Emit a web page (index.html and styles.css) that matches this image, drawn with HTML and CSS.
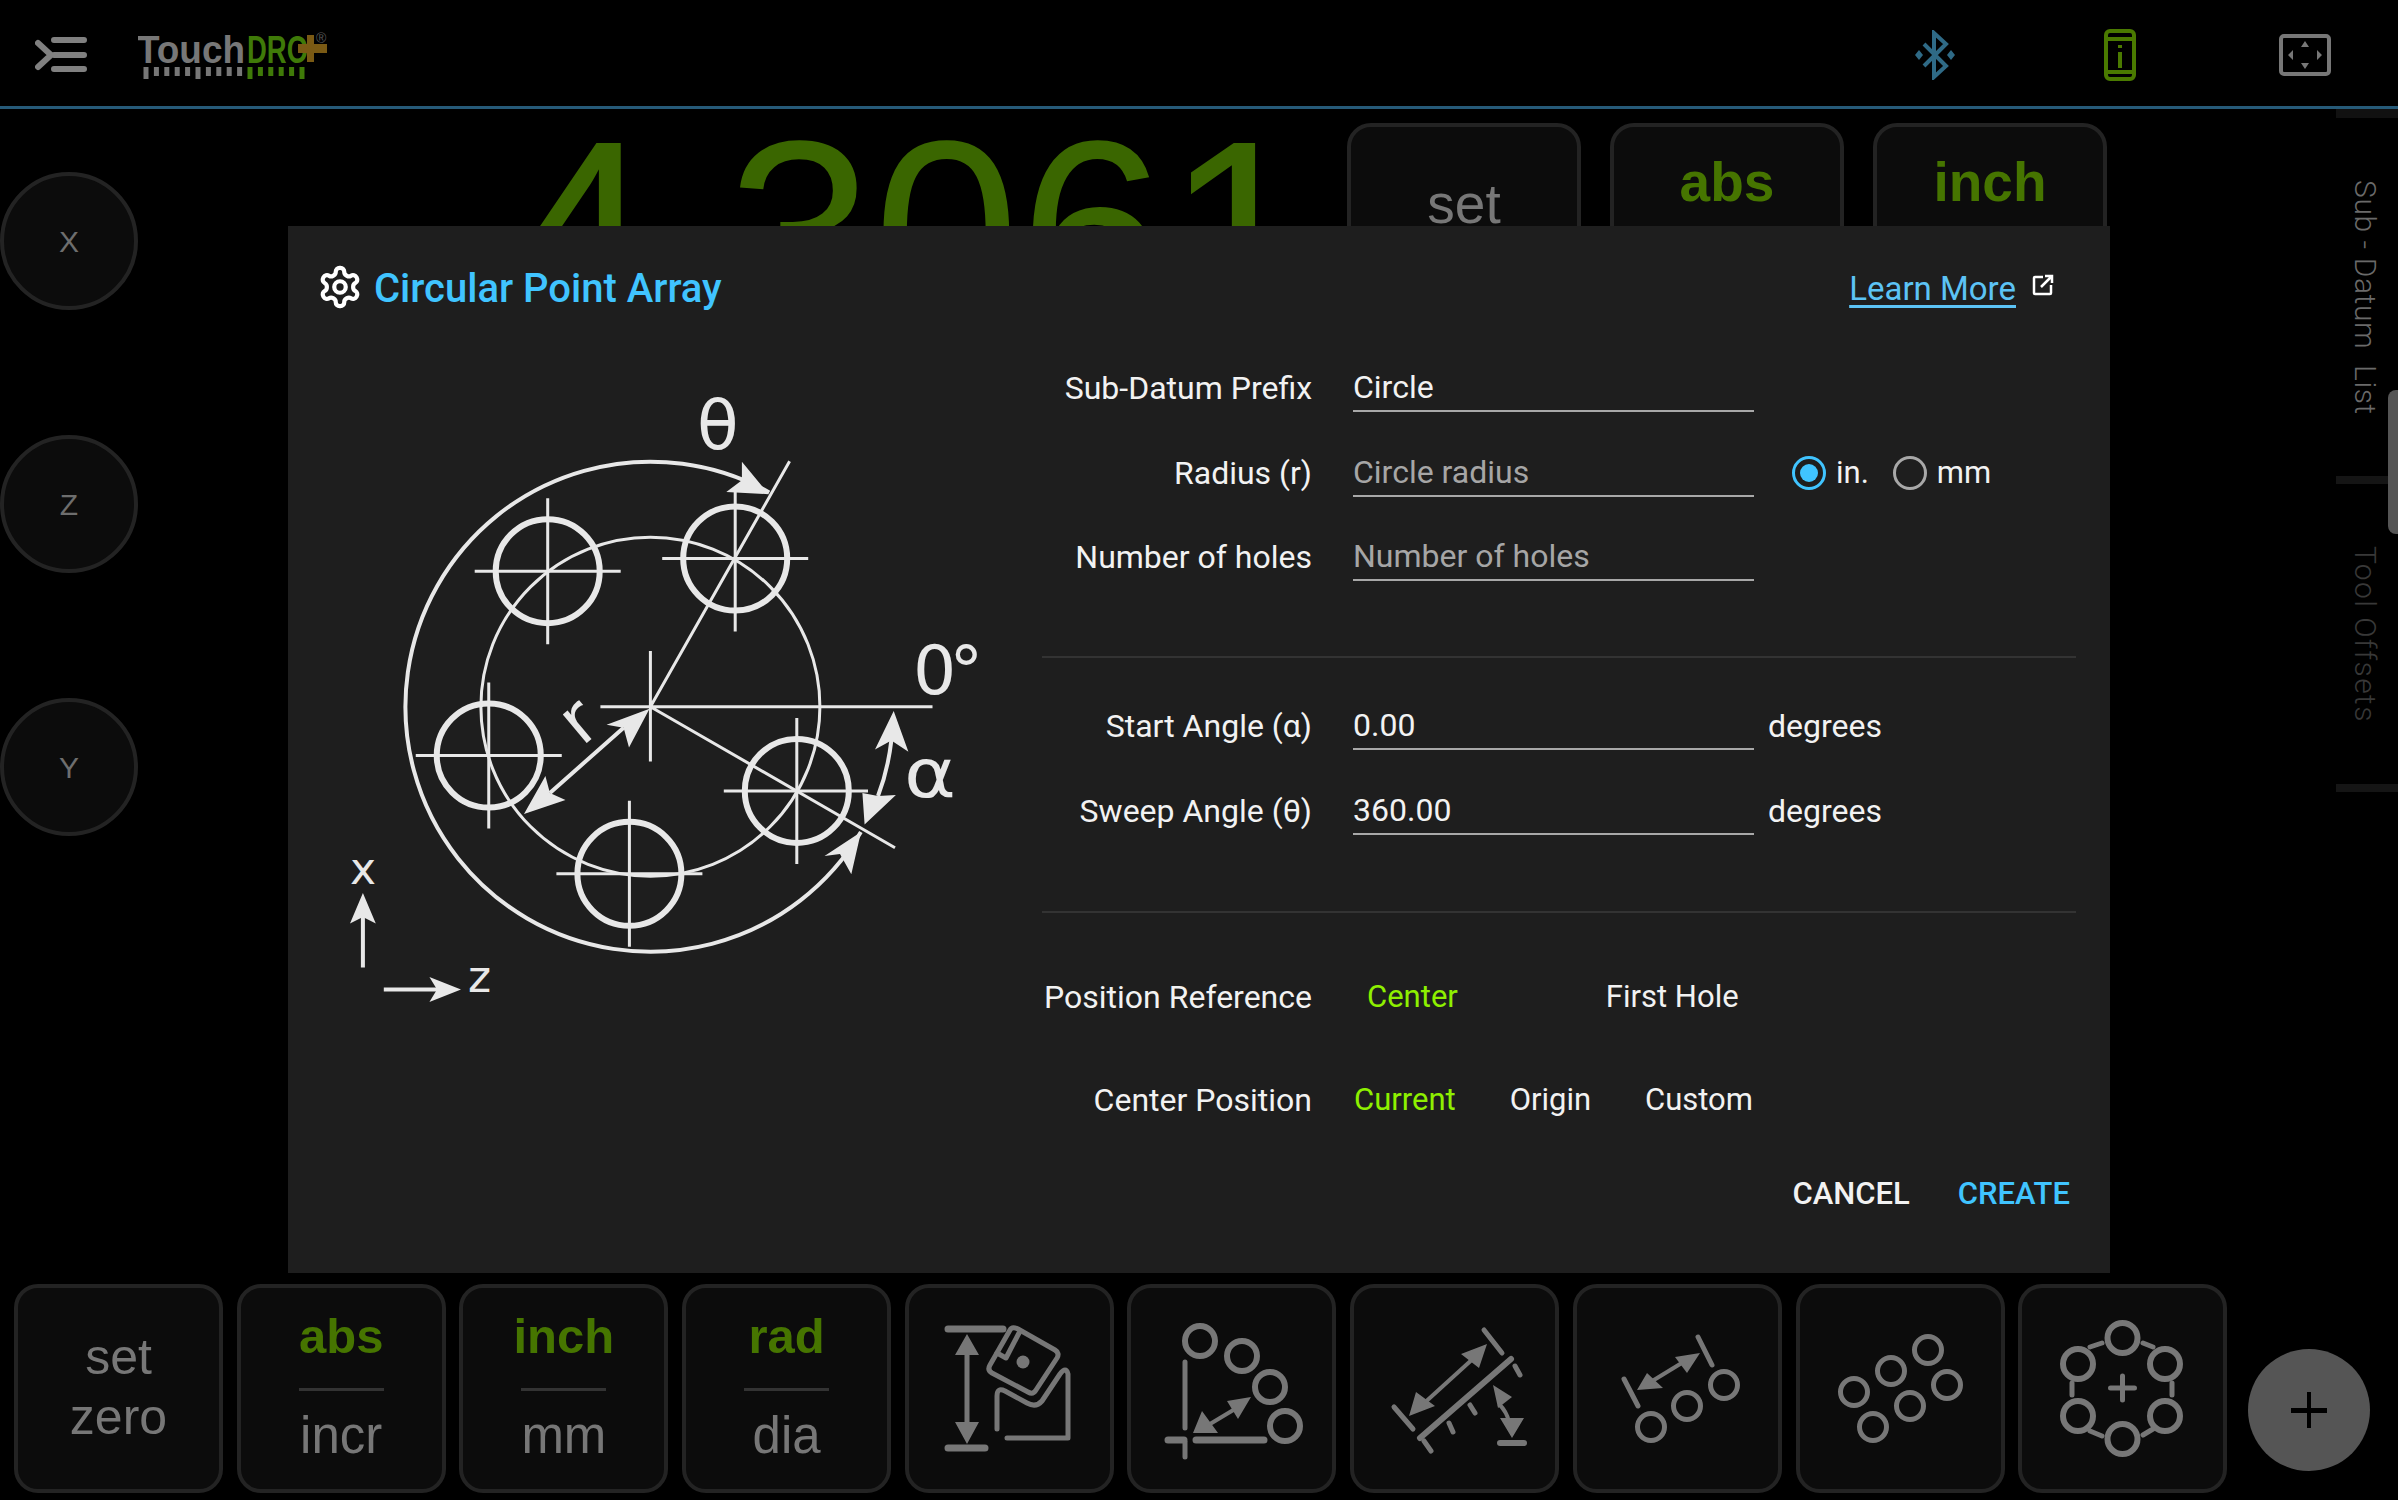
FILE: index.html
```html
<!DOCTYPE html>
<html lang="en">
<head>
<meta charset="utf-8">
<title>TouchDRO - Circular Point Array</title>
<link rel="stylesheet" href="styles.css">
</head>
<body>
<div class="app">
  <header class="topbar">
    <svg class="menu-icon" viewBox="0 0 60 40" width="60" height="40">
      <path class="menu-stroke" d="M3 6 L16 18 L3 30 M19 3 H49 M19 18 H49 M19 32 H49"/>
    </svg>
    <svg class="logo" viewBox="0 0 200 50" width="200" height="50">
      <text class="logo-touch" x="-1" y="34" textLength="108" lengthAdjust="spacingAndGlyphs">Touch</text>
      <text class="logo-dro" x="109" y="34" textLength="61" lengthAdjust="spacingAndGlyphs">DRO</text>
      <path class="logo-plus" d="M169 6 H176 V15 H189 V24 H176 V33 H169 V24 H160 V15 H169 Z"/>
      <text class="logo-reg" x="178" y="14">®</text>
      <path class="ticks-grey" d="M8 38V50 M18.4 38V47 M28.8 38V47 M39.2 38V47 M49.6 38V47 M60 38V50 M70.4 38V47 M80.8 38V47 M91.2 38V47 M101.6 38V47"/>
      <path class="ticks-green" d="M112 38V50 M122.4 38V47 M132.800 38V47 M143.2 38V47 M153.6 38V47 M164 38V50"/>
    </svg>
    <div class="status-icons">
      <svg class="bt" viewBox="0 0 44 50" width="44" height="50">
        <path class="bt-stroke" d="M11 14 L33 36 L21 47 V3 L33 14 L11 36"/>
        <path class="bt-fill" d="M6 20 L10 25 L6 30 L2 25 Z M38 20 L42 25 L38 30 L34 25 Z"/>
      </svg>
      <svg class="phone" viewBox="0 0 32 52" width="32" height="52">
        <rect class="phone-stroke" x="2" y="2" width="28" height="48" rx="4"/>
        <path class="phone-stroke" d="M2 10 H30 M2 43 H30 M16 23 V39"/>
        <rect class="phone-fill" x="14" y="16" width="4" height="3"/>
      </svg>
      <svg class="fit" viewBox="0 0 52 42" width="52" height="42">
        <rect class="fit-stroke" x="2" y="2" width="48" height="38" rx="3"/>
        <path class="fit-fill" d="M26 7 L30 13 H22 Z M26 35 L30 29 H22 Z M9 21 L14 16 V26 Z M43 21 L38 16 V26 Z"/>
      </svg>
    </div>
  </header>

  <main class="main">
    <div class="axes">
      <div class="axis">X</div>
      <div class="axis">Z</div>
      <div class="axis">Y</div>
    </div>
    <div class="readout">
      <div class="digits">4.3061</div>
      <div class="key key-top"><span class="key-set">set</span></div>
      <div class="key key-top"><span class="key-on">abs</span></div>
      <div class="key key-top"><span class="key-on">inch</span></div>
    </div>
    <aside class="rail">
      <div class="rail-cap"></div>
      <div class="rail-item"><span class="rail-label">Sub - Datum&nbsp; List</span></div>
      <div class="rail-item rail-item-off"><span class="rail-label">Tool Offsets</span></div>
      <div class="rail-handle"></div>
    </aside>
  </main>

  <footer class="bottombar">
    <div class="key key-bottom"><div class="two-line">set<br>zero</div></div>
    <div class="key key-bottom"><div class="stack"><span class="stack-on">abs</span><i class="stack-rule"></i><span class="stack-off">incr</span></div></div>
    <div class="key key-bottom"><div class="stack"><span class="stack-on">inch</span><i class="stack-rule"></i><span class="stack-off">mm</span></div></div>
    <div class="key key-bottom"><div class="stack"><span class="stack-on">rad</span><i class="stack-rule"></i><span class="stack-off">dia</span></div></div>

    <div class="key key-bottom">
      <svg class="tool" viewBox="4 4 200 201" width="200" height="201">
        <path class="t7" d="M43 45 H98 M43 164 H80"/>
        <path class="t5" d="M62 66 V144"/>
        <path class="tf" d="M62 50 L74 71 H50 Z M62 160 L74 138 H50 Z"/>
        <path class="t5" d="M113 45 L150 66 Q155 69 152 74 L131 106 Q128 111 123 108 L87 89 Q82 86 85 81 L105 46 Q107 42 113 45 Z"/>
        <path class="t5" d="M114 49 L101 74 L92 69"/>
        <circle class="tf" cx="118" cy="78" r="6.500"/>
        <path class="t5" d="M92 145 V112 Q92 103 100 107 L122 119 Q131 124 137 117 L155 90 Q161 82 163 90 V154 H102"/>
      </svg>
    </div>

    <div class="key key-bottom">
      <svg class="tool" viewBox="4 4 200 201" width="200" height="201">
        <circle class="t6" cx="72" cy="57" r="15"/>
        <circle class="t6" cx="114" cy="72" r="15"/>
        <circle class="t6" cx="142" cy="103" r="15"/>
        <circle class="t6" cx="157" cy="142" r="15"/>
        <path class="t5" d="M57 78 V144"/>
        <path class="t7" d="M68 156 H136 M40 156 H56"/>
        <path class="t5" d="M57 158 V173"/>
        <path class="t4" d="M82 140 L112 122"/>
        <path class="tf" d="M123 113 L110 135 L99 117 Z M65 149 L74 127 L90 149 Z"/>
      </svg>
    </div>

    <div class="key key-bottom">
      <svg class="tool" viewBox="4 4 200 201" width="200" height="201">
        <path class="t6" d="M160 75 L69 154"/>
        <path class="t5" d="M133 46 L151 69 M43 123 L62 145"/>
        <path class="t4" d="M125 72 L70 122 M148 120 Q156 128 158 138"/>
        <path class="tf" d="M136 60 L128 84 L110 70 Z M58 132 L65 108 L84 122 Z"/>
        <path class="t5" d="M164 82 L169 91 M119 121 L124 129 M98 139 L102 148 M73 157 L80 167"/>
        <path class="tf" d="M142 101 L161 113 L147 124 Z M161 154 L149 134 H173 Z"/>
        <path class="t6" d="M149 159 H173"/>
      </svg>
    </div>

    <div class="key key-bottom">
      <svg class="tool" viewBox="4 4 200 201" width="200" height="201">
        <circle class="t5" cx="78" cy="143" r="13.5"/>
        <circle class="t5" cx="114" cy="122" r="13.5"/>
        <circle class="t5" cx="151" cy="101" r="13.5"/>
        <path class="t5" d="M125 53 L139 81 M51 95 L65 122"/>
        <path class="t4" d="M112 77 L76 99"/>
        <path class="tf" d="M127 69 L114 89 L102 73 Z M64 106 L74 89 L90 104 Z"/>
      </svg>
    </div>

    <div class="key key-bottom">
      <svg class="tool" viewBox="4 4 200 201" width="200" height="201">
        <circle class="t5" cx="132" cy="66" r="13.5"/>
        <circle class="t5" cx="95" cy="87" r="13.5"/>
        <circle class="t5" cx="58" cy="108" r="13.5"/>
        <circle class="t5" cx="151" cy="101" r="13.5"/>
        <circle class="t5" cx="114" cy="122" r="13.5"/>
        <circle class="t5" cx="77" cy="143" r="13.5"/>
      </svg>
    </div>

    <div class="key key-bottom">
      <svg class="tool" viewBox="4 4 200 201" width="200" height="201">
        <circle class="t6" cx="103.500" cy="54" r="15"/>
        <circle class="t6" cx="146" cy="80" r="15"/>
        <circle class="t6" cx="146" cy="132" r="15"/>
        <circle class="t6" cx="103.500" cy="155" r="15"/>
        <circle class="t6" cx="59" cy="132" r="15"/>
        <circle class="t6" cx="59" cy="80" r="15"/>
        <path class="t5" d="M71 63 L83 59 M124 59 L134 63 M153 99 V111 M134 145 L124 151 M71 147 L83 152 M53 99 V111"/>
        <path class="t5" d="M91.500 104 H115.500 M103.500 92 V116"/>
      </svg>
    </div>

    <div class="fab"><span class="fab-plus"></span></div>
  </footer>

  <section class="dialog">
    <div class="dialog-head">
      <svg class="gear" viewBox="0 0 24 24" width="46" height="46">
        <path d="M12.220 2h-.44a2 2 0 0 0-2 2v.18a2 2 0 0 1-1 1.730l-.43.25a2 2 0 0 1-2 0l-.15-.08a2 2 0 0 0-2.730.73l-.22.38a2 2 0 0 0 .73 2.730l.15.1a2 2 0 0 1 1 1.720v.51a2 2 0 0 1-1 1.740l-.15.09a2 2 0 0 0-.73 2.730l.22.38a2 2 0 0 0 2.730.73l.15-.08a2 2 0 0 1 2 0l.43.25a2 2 0 0 1 1 1.730V20a2 2 0 0 0 2 2h.44a2 2 0 0 0 2-2v-.18a2 2 0 0 1 1-1.730l.43-.25a2 2 0 0 1 2 0l.15.08a2 2 0 0 0 2.730-.73l.22-.39a2 2 0 0 0-.73-2.730l-.15-.08a2 2 0 0 1-1-1.740v-.5a2 2 0 0 1 1-1.740l.15-.09a2 2 0 0 0 .73-2.730l-.22-.38a2 2 0 0 0-2.730-.73l-.15.08a2 2 0 0 1-2 0l-.43-.25a2 2 0 0 1-1-1.730V4a2 2 0 0 0-2-2z"/>
        <circle cx="12" cy="12" r="3"/>
      </svg>
      <h1 class="dialog-title">Circular Point Array</h1>
      <a class="learn">Learn More</a>
      <svg class="ext" viewBox="0 0 22 22" width="22" height="22">
        <path d="M11 3 H3 Q2 3 2 4 V19 Q2 20 3 20 H18 Q19 20 19 19 V11 M9 13 L20 2 M13 2 H20 V9"/>
      </svg>
    </div>

    <div class="dialog-body">
      <svg class="diagram" viewBox="320 370 700 660" width="700" height="660">
        <path class="d4" d="M769.200 492.400 A245 245 0 1 0 860.900 832.100"/>
        <circle class="d3" cx="650.400" cy="706.700" r="169.500"/>
        <g class="d5">
          <circle cx="547.700" cy="571.200" r="52"/>
          <circle cx="735.200" cy="558.500" r="52"/>
          <circle cx="488.750" cy="755.500" r="52"/>
          <circle cx="629.400" cy="873.800" r="52"/>
          <circle cx="796.800" cy="790.900" r="52"/>
        </g>
        <path class="d3" d="M474.700 571.200 H620.700 M547.700 498.200 V644.200 M662.200 558.500 H808.200 M735.200 490 V631.500 M415.750 755.500 H561.750 M488.750 682.500 V828.500 M556.400 873.800 H702.400 M629.400 800.800 V946.800 M723.800 790.900 H868 M796.800 717.900 V863.900"/>
        <path class="d3" d="M600.400 706.700 H932.500 M650.400 651 V761.400 M650.400 706.700 L789.600 461.300 M650.400 706.700 L895 847.700"/>
        <path class="d4" d="M623.600 727.700 L549.900 793 M891.400 740 Q888 770 878 796 M362.900 967.600 V917 M383.800 989.500 H437"/>
        <g class="dfill">
          <path d="M768.700 494.200 L741.900 461.800 L741.900 480.300 L726.300 492 Z"/>
          <path d="M861 832 L824.500 856 L840 854 L851.300 874.200 Z"/>
          <path d="M649.500 708.800 L606.600 724.800 L623.600 727.700 L629 747.500 Z"/>
          <path d="M524 814 L545.400 776 L549.900 793 L565.500 800 Z"/>
          <path d="M893.700 710.900 L875 749.600 L891.400 740.400 L908.400 751.700 Z"/>
          <path d="M864.600 824.500 L862.400 793 L878 796 L895.900 795 Z"/>
          <path d="M362.900 893 L350 923.500 L362.900 917 L375.800 923.500 Z"/>
          <path d="M461 989.500 L429.400 977 L437 989.500 L429.400 1002 Z"/>
        </g>
        <text class="dtext" x="697" y="449">θ</text>
        <text class="dtext dtext-tight" x="913" y="694">0°</text>
        <text class="dtext" x="904" y="797" textLength="52" lengthAdjust="spacingAndGlyphs">α</text>
        <text class="dtext" transform="rotate(-40 582 747)" x="582" y="747">r</text>
        <text class="dtext-sm" x="350" y="883.500">x</text>
        <text class="dtext-sm" x="468" y="992">z</text>
      </svg>

      <form class="form">
        <div class="group">
          <div class="row">
            <div class="label">Sub-Datum Prefix</div>
            <div class="field">Circle</div>
          </div>
          <div class="row">
            <div class="label">Radius (r)</div>
            <div class="field field-hint">Circle radius</div>
            <div class="radios">
              <span class="radio radio-on"><i></i></span><span class="radio-text">in.</span>
              <span class="radio radio-off"></span><span class="radio-text">mm</span>
            </div>
          </div>
          <div class="row">
            <div class="label">Number of holes</div>
            <div class="field field-hint">Number of holes</div>
          </div>
        </div>
        <div class="rule rule-first"></div>
        <div class="group">
          <div class="row">
            <div class="label">Start Angle (α)</div>
            <div class="field">0.00</div>
            <div class="unit">degrees</div>
          </div>
          <div class="row">
            <div class="label">Sweep Angle (θ)</div>
            <div class="field">360.00</div>
            <div class="unit">degrees</div>
          </div>
        </div>
        <div class="rule rule-second"></div>
        <div class="row row-ref">
          <div class="label">Position Reference</div>
          <div class="choices choices-ref"><span class="chosen">Center</span><span>First Hole</span></div>
        </div>
        <div class="row row-center">
          <div class="label">Center Position</div>
          <div class="choices choices-center"><span class="chosen">Current</span><span>Origin</span><span>Custom</span></div>
        </div>
        <div class="actions">
          <span class="action">CANCEL</span>
          <span class="action action-main">CREATE</span>
        </div>
      </form>
    </div>
  </section>
</div>
</body>
</html>
```

FILE: styles.css
```css
* { box-sizing: border-box; }
html, body { margin: 0; padding: 0; background: #000; }
body { font-family: "Roboto", "Liberation Sans", sans-serif; }

.app {
  position: relative;
  width: 2398px;
  height: 1500px;
  overflow: hidden;
  display: flex;
  flex-direction: column;
  background: #000;
}

/* top bar */
.topbar {
  height: 109px;
  flex: none;
  border-bottom: 3px solid #265a78;
  display: flex;
  align-items: center;
  padding-left: 35px;
}
.menu-icon { flex: none; margin-top: 8px; }
.menu-stroke { fill: none; stroke: #808080; stroke-width: 6; stroke-linecap: round; stroke-linejoin: round; }
.logo { flex: none; margin-left: 43px; margin-top: 2px; }
.logo-touch, .logo-dro { font: 700 38px "Liberation Sans", sans-serif; }
.logo-touch { fill: #777; }
.logo-dro { fill: #3f7a08; }
.logo-plus { fill: #7a5a14; }
.logo-reg { font: 14px "Liberation Sans", sans-serif; fill: #555; }
.ticks-grey { stroke: #777; stroke-width: 5; fill: none; }
.ticks-green { stroke: #3f7a08; stroke-width: 5; fill: none; }

.status-icons { margin-left: auto; display: flex; align-items: center; padding: 4px 67px 0 0; }
.bt { margin-right: 147px; }
.bt-stroke { fill: none; stroke: #2f6a86; stroke-width: 4; stroke-linejoin: miter; }
.bt-fill { fill: #2f6a86; }
.phone { margin-right: 143px; }
.phone-stroke { fill: none; stroke: #4a7a00; stroke-width: 4; }
.phone-fill { fill: #4a7a00; }
.fit-stroke { fill: none; stroke: #777; stroke-width: 4; }
.fit-fill { fill: #777; }

/* main area */
.main { flex: 1; min-height: 0; display: flex; position: relative; }
.axes { flex: none; width: 139px; padding: 63px 0 0; display: flex; flex-direction: column; gap: 125px; }
.axis {
  width: 138px;
  height: 138px;
  border-radius: 50%;
  background: #0c0c0c;
  border: 4px solid #232323;
  display: flex;
  align-items: center;
  justify-content: center;
  color: #6e6e6e;
  font: 30px "Liberation Sans", sans-serif;
  padding-top: 2px;
}
.readout { flex: 1; display: flex; align-items: flex-start; gap: 29px; padding: 14px 0 0; min-width: 0; }
.digits {
  flex: 1;
  text-align: right;
  font: 263px/266px "Liberation Sans", sans-serif;
  color: #3a6600;
  margin-right: 6px;
  margin-top: -23px;
}
.key {
  flex: none;
  background: #0c0c0c;
  border: 4px solid #232323;
  border-radius: 24px;
  display: flex;
  justify-content: center;
  font-family: "Liberation Sans", sans-serif;
}
.key-top { width: 234px; height: 210px; font-size: 55px; line-height: 60px; }
.key-set { color: #777; padding-top: 47px; }
.key-on { color: #467500; font-weight: 700; padding-top: 25px; }

/* right rail */
.rail { flex: none; width: 62px; margin-left: 229px; display: flex; flex-direction: column; }
.rail-cap { height: 9px; background: #111; }
.rail-item {
  height: 366px;
  border-bottom: 8px solid #151515;
  padding: 62px 0 0 13px;
  display: flex;
  justify-content: flex-start;
}
.rail-item .rail-label { letter-spacing: 0.6px; }
.rail-item-off { height: 308px; padding-top: 62px; }
.rail-item-off .rail-label { color: #383838; letter-spacing: 1.4px; }
.rail-label {
  writing-mode: vertical-rl;
  font-size: 30px;
  line-height: 32px;
  font-weight: 300;
  color: #6a6a6a;
  white-space: nowrap;
}
.rail-handle {
  position: absolute;
  right: 0;
  top: 281px;
  width: 10px;
  height: 144px;
  background: #555;
  border-radius: 8px 0 0 8px;
}

/* bottom bar */
.bottombar {
  flex: none;
  height: 216px;
  display: flex;
  align-items: flex-start;
  gap: 13.700px;
  padding-left: 14px;
}
.key-bottom { width: 209px; height: 209px; align-items: center; overflow: hidden; }
.tool { display: block; flex: none; }
.two-line { font-size: 50px; line-height: 60px; color: #777; text-align: center; margin-top: -4px; }
.stack { display: flex; flex-direction: column; align-items: center; margin-top: -5px; }
.stack-on { font-size: 49px; line-height: 60px; font-weight: 700; color: #467500; }
.stack-off { font-size: 51px; line-height: 60px; color: #777; }
.stack-rule { display: block; width: 85px; height: 3px; background: #333; margin: 22px 0 15px; }
.t4, .t5, .t6, .t7 { fill: none; stroke: #777; }
.t4 { stroke-width: 4; }
.t5 { stroke-width: 5; stroke-linecap: round; stroke-linejoin: round; }
.t6 { stroke-width: 6; stroke-linecap: round; }
.t7 { stroke-width: 7; stroke-linecap: round; }
.tf { fill: #777; stroke: none; }

.fab {
  flex: none;
  width: 122px;
  height: 122px;
  margin: 65px 0 0 7px;
  border-radius: 50%;
  background: #555;
  display: flex;
  align-items: center;
  justify-content: center;
}
.fab-plus {
  position: relative;
  width: 36px;
  height: 5px;
  background: #000;
}
.fab-plus::after {
  content: "";
  position: absolute;
  left: 16px;
  top: -16px;
  width: 4px;
  height: 36px;
  background: #000;
}

/* dialog */
.dialog {
  position: absolute;
  left: 288px;
  top: 226px;
  width: 1822px;
  height: 1047px;
  background: #1e1e1e;
  display: flex;
  flex-direction: column;
}
.dialog-head { height: 124px; margin-bottom: -2px; flex: none; display: flex; align-items: center; padding: 0 56px 0 29px; }
.gear { flex: none; fill: none; stroke: #fff; stroke-width: 2.200; margin: -2px 11px 0 0; }
.dialog-title { margin: 0; font-size: 40px; font-weight: 500; color: #40c4ff; }
.learn { margin-left: auto; font-size: 33px; color: #5cc3f5; text-decoration: underline; text-underline-offset: 5px; }
.ext { flex: none; margin: -6px 0 0 16px; fill: none; stroke: #fff; stroke-width: 2.500; }

.dialog-body { display: flex; flex: 1; min-height: 0; padding-left: 32px; }
.diagram { flex: none; margin-top: 22px; }
.d3, .d4, .d5 { fill: none; stroke: #e8e8e8; }
.d3 { stroke-width: 3; }
.d4 { stroke-width: 4; }
.d5 { stroke-width: 6; }
.dfill { fill: #e8e8e8; }
.dtext { font: 68px "DejaVu Sans", sans-serif; fill: #e8e8e8; }
.dtext-tight { letter-spacing: -7px; }
.dtext-sm { font: 44px "DejaVu Sans", sans-serif; fill: #e8e8e8; }

.form { flex: none; width: 1035px; margin-left: 21px; padding-top: 16px; font-size: 32px; color: #f2f2f2; }
.group { display: flex; flex-direction: column; gap: 36.670px; }
.row { display: flex; align-items: center; height: 48px; }
.label { flex: none; width: 271px; margin-right: 41px; text-align: right; white-space: nowrap; line-height: 48px; }
.field { flex: none; width: 401px; height: 48px; line-height: 46px; border-bottom: 2px solid #a8a8a8; }
.field-hint { color: #a6a6a6; }
.unit { margin-left: 14px; }
.radios { display: flex; align-items: center; margin-left: 38px; }
.radio { flex: none; width: 34px; height: 34px; border-radius: 50%; display: flex; align-items: center; justify-content: center; }
.radio-on { border: 3px solid #40c4ff; }
.radio-on i { width: 18px; height: 18px; border-radius: 50%; background: #40c4ff; }
.radio-off { border: 3px solid #a8a8a8; margin-left: 24px; }
.radio-text { margin-left: 10px; font-size: 31px; }
.rule { height: 2px; background: #333; }
.rule-first { margin: 75px 0 44px 1px; }
.rule-second { margin: 76px 0 60px 1px; }
.row-center { margin-top: 55px; }
.choices { flex: none; width: 401px; display: flex; font-size: 31px; }
.choices-ref { padding-left: 14px; gap: 148px; }
.choices-center { justify-content: space-between; padding: 0 1px 0 1px; }
.chosen { color: #8ef000; }
.actions { display: flex; justify-content: flex-end; gap: 48px; margin-top: 46px; padding-right: 6px; line-height: 48px; font-size: 31px; }
.action { font-weight: 500; }
.action-main { color: #40c4ff; }
```
